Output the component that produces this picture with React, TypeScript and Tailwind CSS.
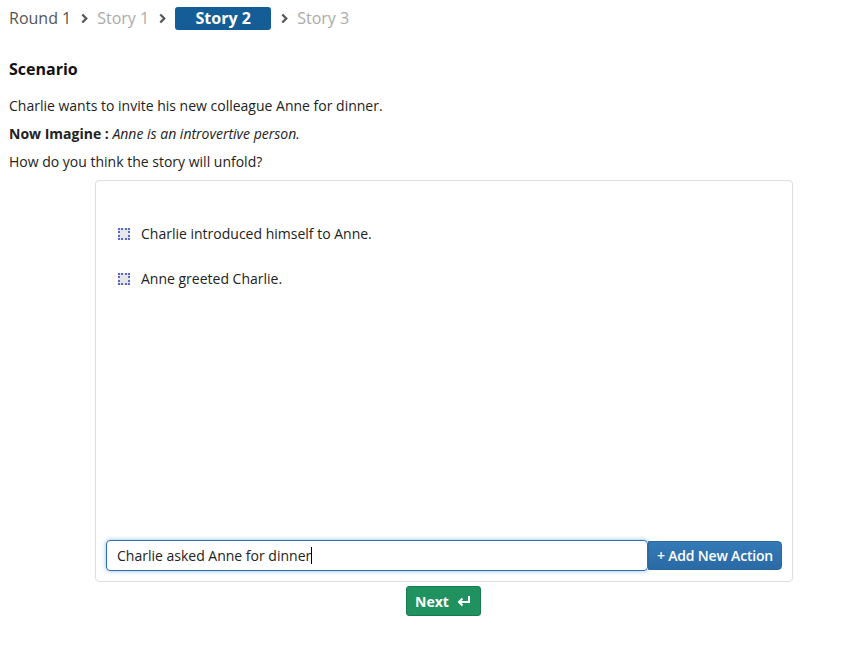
import React from 'react';

function Chevron() {
  return (
    <svg width="7" height="11" viewBox="0 0 7 11" className="ml-[10px] mr-[9px]">
      <path d="M1.3 1.5 L5.3 5.5 L1.3 9.5" fill="none" stroke="#555" strokeWidth="2.2" />
    </svg>
  );
}

function DragIcon() {
  return (
    <span className="inline-block w-[12px] h-[12px] border-2 border-dotted border-[#5868d0] bg-[#e6e6ea] mr-[11px] shrink-0" />
  );
}

export default function App() {
  const actions = ['Charlie introduced himself to Anne.', 'Anne greeted Charlie.'];

  return (
    <div className="w-[854px] h-[664px] bg-white text-[#222] font-['Open_Sans',sans-serif]">
      {/* breadcrumb */}
      <div className="flex items-center pl-[9px] pt-[6px] h-[30px] text-[16px]">
        <span className="text-[#555]">Round 1</span>
        <Chevron />
        <span className="text-[#aaa]">Story 1</span>
        <Chevron />
        <span className="w-[96px] h-[23px] flex items-center justify-center rounded-[3px] bg-[#155d96] text-white font-bold">
          Story 2
        </span>
        <Chevron />
        <span className="text-[#aaa]">Story 3</span>
      </div>

      <div className="px-[9px]">
        <h3 className="mt-[27px] text-[16px] font-bold text-[#111]">Scenario</h3>
        <p className="mt-[11px] text-[14px] leading-[28px]">Charlie wants to invite his new colleague Anne for dinner.</p>
        <p className="text-[14px] leading-[28px]">
          <b>Now Imagine :</b> <i>Anne is an introvertive person.</i>
        </p>
        <p className="text-[14px] leading-[28px]">How do you think the story will unfold?</p>
      </div>

      <div className="ml-[95px] mt-[4px] w-[698px] h-[402px] border border-[#ddd] rounded-[4px] flex flex-col p-[10px]">
        <ul className="flex-1 pl-[12px] pt-[20px] text-[14px]">
          {actions.map((a) => (
            <li key={a} className="flex items-center h-[45px]">
              <DragIcon />
              <span>{a}</span>
            </li>
          ))}
        </ul>
        <div className="flex">
          <div className="flex-1 h-[31px] border border-[#2f6db0] rounded-[4px] shadow-[0_0_4px_rgba(60,140,220,0.6)] flex items-center pl-[10px] text-[14px] text-[#222]">
            Charlie asked Anne for dinner
            <span className="inline-block w-px h-[17px] bg-black" />
          </div>
          <button className="w-[134px] h-[29px] mt-[1px] rounded-r-[4px] bg-gradient-to-b from-[#337ab7] to-[#2a6aa5] border border-[#2b68a0] text-white text-[14px] font-semibold tracking-[-0.2px]">
            + Add New Action
          </button>
        </div>
      </div>

      <div className="flex justify-center mt-[4px] pr-[10px]">
        <button className="w-[75px] h-[30px] ml-[42px] flex items-center justify-center gap-[7px] rounded-[3px] bg-[#1f9260] border border-[#187a4f] text-white text-[14px] font-bold">
          Next
          <svg width="15" height="13" viewBox="0 0 15 13">
            <path d="M13 1 V7 H3.5" fill="none" stroke="white" strokeWidth="2" />
            <path d="M6.5 3.5 L3 7 L6.5 10.5" fill="none" stroke="white" strokeWidth="2" />
          </svg>
        </button>
      </div>
    </div>
  );
}
